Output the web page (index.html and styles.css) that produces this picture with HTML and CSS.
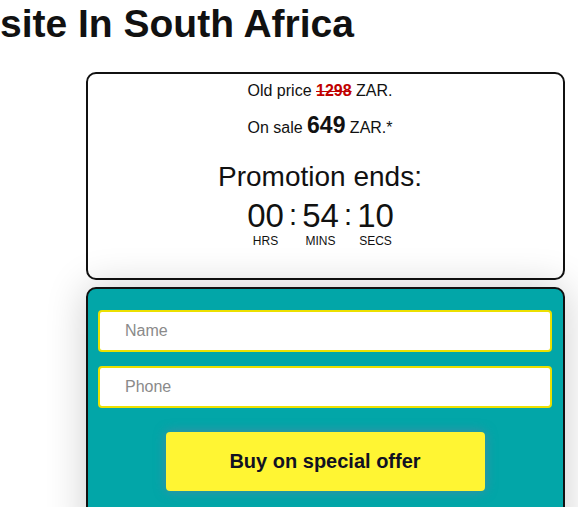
FILE: index.html
```html
<!DOCTYPE html>
<html>
<head>
<meta charset="utf-8">
<link rel="stylesheet" href="styles.css">
</head>
<body>
<h1 class="title">site In South Africa</h1>
<div class="wrap">
  <div class="price-card">
    <div class="old">Old price <span class="old-num">1298</span> ZAR.</div>
    <div class="sale">On sale <span class="sale-num">649</span> ZAR.*</div>
    <div class="promo">Promotion ends:</div>
    <div class="timer">
      <div class="unit"><div class="num">00</div><div class="lbl">HRS</div></div>
      <div class="colon">:</div>
      <div class="unit"><div class="num">54</div><div class="lbl">MINS</div></div>
      <div class="colon">:</div>
      <div class="unit"><div class="num">10</div><div class="lbl">SECS</div></div>
    </div>
  </div>
  <form class="order">
    <input class="field" type="text" placeholder="Name">
    <input class="field" type="text" placeholder="Phone">
    <button class="buy" type="button">Buy on special offer</button>
  </form>
</div>
</body>
</html>
```
FILE: styles.css
```css
html, body {
  margin: 0;
  padding: 0;
  background: #fff;
  font-family: "Liberation Sans", Arial, sans-serif;
  color: #111;
  overflow: hidden;
  height: 507px;
}
.title {
  margin: 0;
  padding-top: 1px;
  font-size: 39px;
  line-height: 46px;
  font-weight: bold;
  color: #111;
  white-space: nowrap;
}
.wrap {
  margin-left: 86px;
  width: 479px;
  padding-top: 25px;
}
.price-card {
  box-sizing: border-box;
  height: 208px;
  border: 2px solid #111;
  border-radius: 10px;
  background: #fff;
  text-align: center;
  padding: 7px 11px 0 0;
}
.old {
  font-size: 16px;
  line-height: 20px;
}
.old-num {
  color: #c00000;
  font-weight: bold;
  text-decoration: line-through;
}
.sale {
  margin-top: 9px;
  font-size: 16px;
  line-height: 30px;
}
.sale-num {
  font-size: 23px;
  font-weight: bold;
}
.promo {
  margin-top: 18px;
  font-size: 28px;
  line-height: 32px;
}
.timer {
  display: flex;
  justify-content: center;
  margin-top: 6px;
  padding-left: 1px;
}
.unit {
  width: 40px;
  display: flex;
  flex-direction: column;
  align-items: center;
}
.num {
  font-size: 33px;
  line-height: 34px;
}
.lbl {
  font-size: 12px;
  line-height: 14px;
  margin-top: 1px;
}
.colon {
  width: 15px;
  font-size: 29px;
  line-height: 32px;
}
.order {
  box-sizing: border-box;
  margin: 7px 0 0 0;
  height: 260px;
  border: 2px solid #111;
  border-radius: 10px;
  background: #02a6a8;
  padding: 21px 11px 0 10px;
  display: flex;
  flex-direction: column;
  align-items: center;
  box-shadow: 0 0 40px rgba(0, 0, 0, 0.2);
  position: relative;
}
.field {
  box-sizing: border-box;
  width: 100%;
  height: 42px;
  border: 2px solid #ece000;
  border-radius: 4px;
  background: #fff;
  padding: 0 25px;
  font-family: "Liberation Sans", Arial, sans-serif;
  font-size: 16px;
  color: #333;
  outline: none;
  margin: 0 0 14px 0;
}
.field::placeholder {
  color: #8a8a8a;
}
.buy {
  margin-top: 10px;
  width: 319px;
  height: 59px;
  border: none;
  border-radius: 4px;
  background: #fff533;
  font-family: "Liberation Sans", Arial, sans-serif;
  font-size: 20px;
  font-weight: bold;
  color: #111122;
  box-shadow: 0 0 12px rgba(120, 120, 160, 0.6);
  cursor: pointer;
}
```
